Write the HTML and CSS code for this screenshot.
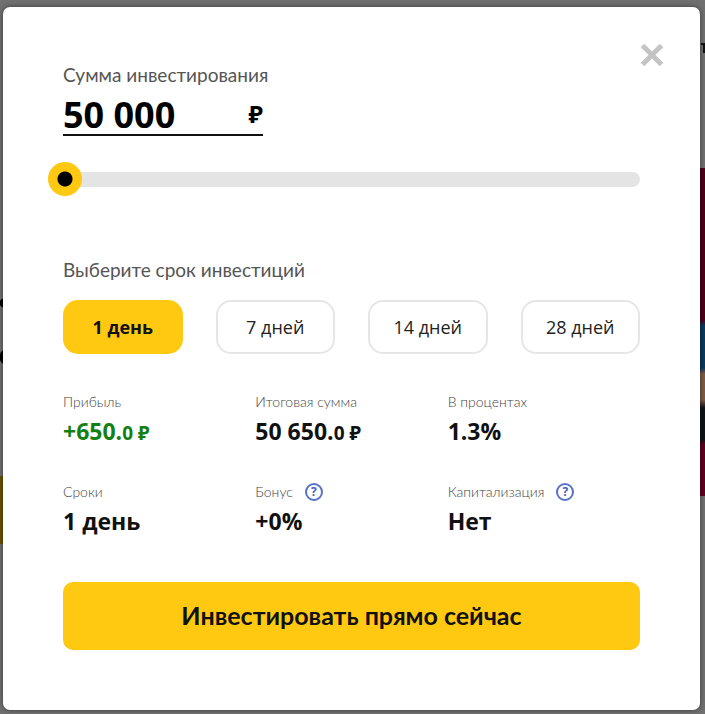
FILE: index.html
```html
<!DOCTYPE html>
<html lang="ru">
<head>
  <meta charset="UTF-8">
  <meta name="viewport" content="width=device-width, initial-scale=1">
  <title>Калькулятор инвестиций</title>
  <link rel="stylesheet" href="styles.css">
</head>
<body>
  <div class="modal" role="dialog" aria-modal="true" aria-label="Калькулятор инвестиций">
    <button class="close" type="button" aria-label="Закрыть">
      <svg width="24" height="24" viewBox="0 0 24 24"><path d="M2.5 2.5l19 19M21.5 2.5l-19 19" stroke="#c4c4c4" stroke-width="5"/></svg>
    </button>

    <form class="calc">
      <label class="title" for="amount">Сумма инвестирования</label>
      <div class="amount-row">
        <input id="amount" class="amount" type="text" inputmode="numeric" value="50 000">
        <span class="currency">₽</span>
      </div>
      <input class="slider" type="range" min="50000" max="5000000" step="10000" value="50000" aria-label="Сумма инвестирования">

      <p class="title title-term" id="term-title">Выберите срок инвестиций</p>
      <div class="terms" role="group" aria-labelledby="term-title">
        <button class="term active" type="button" aria-pressed="true">1 день</button>
        <button class="term" type="button" aria-pressed="false">7 дней</button>
        <button class="term" type="button" aria-pressed="false">14 дней</button>
        <button class="term" type="button" aria-pressed="false">28 дней</button>
      </div>

      <dl class="stats">
        <div class="stat">
          <dt>Прибыль</dt>
          <dd class="profit">+650.<small>0 ₽</small></dd>
        </div>
        <div class="stat">
          <dt>Итоговая сумма</dt>
          <dd>50 650.<small>0 ₽</small></dd>
        </div>
        <div class="stat">
          <dt>В процентах</dt>
          <dd>1.3%</dd>
        </div>
        <div class="stat">
          <dt>Сроки</dt>
          <dd>1 день</dd>
        </div>
        <div class="stat">
          <dt>Бонус <button class="help" type="button" aria-label="Подробнее о бонусе">?</button></dt>
          <dd>+0%</dd>
        </div>
        <div class="stat">
          <dt>Капитализация <button class="help" type="button" aria-label="Подробнее о капитализации">?</button></dt>
          <dd>Нет</dd>
        </div>
      </dl>

      <button class="submit" type="submit">Инвестировать прямо сейчас</button>
    </form>
  </div>
</body>
</html>
```
FILE: styles.css
```css
* { box-sizing: border-box; }

/* dimmed page behind the modal */
body {
  margin: 0;
  padding: 7px 5px 3px 3px;
  font-family: "Open Sans", "Noto Sans", sans-serif;
  color: #111;
  background:
    radial-gradient(circle at 4px 303px, #000 4px, transparent 5px),
    radial-gradient(circle at 8px 357px, #000 8px, transparent 9px),
    linear-gradient(#6b5200, #6b5200) left 0 top 476px / 4px 68px no-repeat,
    linear-gradient(#111, #111) right 0 top 43px / 4px 2px no-repeat,
    linear-gradient(#111, #111) right 0 top 43px / 2px 10px no-repeat,
    linear-gradient(#4d0018 0 152px, #0a3a5c 158px 200px, #7d5a46 206px 232px, #101418 240px 272px, #5c001f 276px) right 0 top 168px / 5px 328px no-repeat,
    #707070;
}

.modal {
  position: relative;
  padding: 58px 60px 60px;
  background: #fff;
  border-radius: 7px;
  box-shadow: 0 0 5px rgba(0,0,0,0.5);
}

.close {
  position: absolute;
  top: 36px;
  right: 36px;
  width: 24px;
  height: 24px;
  padding: 0;
  border: none;
  background: none;
  cursor: pointer;
}
.close svg { display: block; }

.calc { display: flex; flex-direction: column; }

.title { margin: 0; font-family: Lato, sans-serif; font-size: 19px; line-height: 20px; color: #555; }
.title-term { margin-top: 64px; }

.amount-row {
  display: flex;
  align-items: center;
  width: 200px;
  height: 43px;
  margin-top: 8px;
  border-bottom: 2px solid #111;
}
.amount {
  flex: 1;
  min-width: 0;
  padding: 2px 0 0;
  border: none;
  outline: none;
  background: none;
  font: 700 36px/40px "Open Sans", sans-serif;
  color: #000;
}
.currency { font-size: 24px; line-height: 30px; font-weight: 700; color: #000; }

.slider {
  -webkit-appearance: none;
  appearance: none;
  height: 34px;
  margin: 26px 0 0 -15px;
  background: none;
  cursor: pointer;
}
.slider::-webkit-slider-runnable-track { height: 15px; border-radius: 8px; background: #e4e4e4; }
.slider::-webkit-slider-thumb {
  -webkit-appearance: none;
  width: 34px;
  height: 34px;
  margin-top: -10px;
  border-radius: 50%;
  background: radial-gradient(circle, #000 7px, #ffc912 8px);
}

.terms { display: grid; grid-template-columns: repeat(4, 1fr); gap: 33px; margin-top: 20px; }
.term {
  height: 54px;
  padding: 0;
  border: 2px solid #e6e6e6;
  border-radius: 15px;
  background: #fff;
  font: 400 18px "Open Sans", sans-serif;
  color: #222;
  cursor: pointer;
}
.term.active { border-color: #ffc912; background: #ffc912; font-weight: 700; color: #111; }

.stats { display: grid; grid-template-columns: repeat(3, 1fr); row-gap: 36px; margin: 38px 0 0; }
.stat dt { display: flex; align-items: center; gap: 12px; height: 20px; font: 300 14px/20px Lato, sans-serif; color: #444; }
.stat dd { margin: 4px 0 0; font-size: 23px; line-height: 30px; font-weight: 700; white-space: nowrap; }
.stat small { font-size: 19px; line-height: 20px; }
.stat .profit { color: #138013; }

.help {
  width: 18px;
  height: 18px;
  padding: 0;
  border: 2px solid #5872c8;
  border-radius: 50%;
  background: none;
  font: 700 12px/14px "Open Sans", sans-serif;
  color: #4460c0;
  cursor: pointer;
}

.submit {
  height: 68px;
  margin-top: 46px;
  padding: 0 0 2px;
  border: none;
  border-radius: 10px;
  background: #ffc912;
  font: 700 25px Lato, sans-serif;
  color: #111;
  cursor: pointer;
}
```
